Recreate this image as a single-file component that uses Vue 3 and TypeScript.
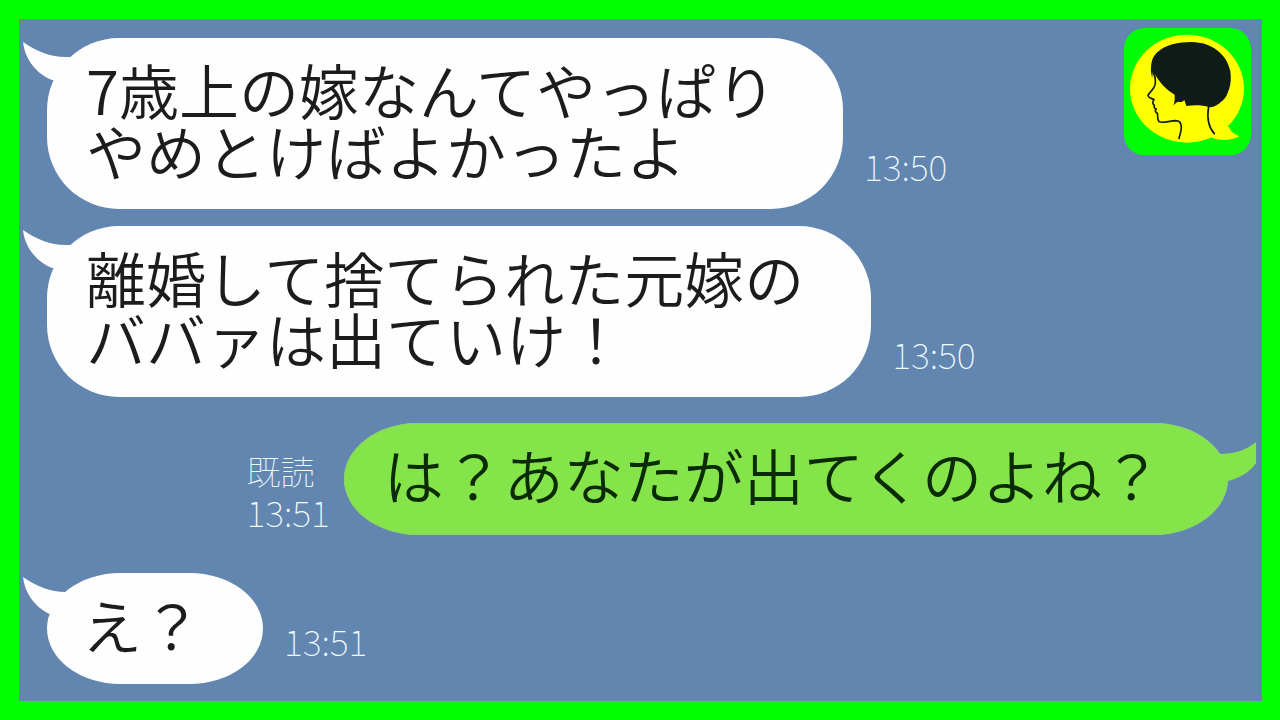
<script setup lang="ts">
interface Message {
  id: number
  side: 'left' | 'right'
  lines: string[]
  time: string
  read?: string
}

const messages: Message[] = [
  { id: 1, side: 'left', lines: ['7歳上の嫁なんてやっぱり', 'やめとけばよかったよ'], time: '13:50' },
  { id: 2, side: 'left', lines: ['離婚して捨てられた元嫁の', 'ババァは出ていけ！'], time: '13:50' },
  { id: 3, side: 'right', lines: ['は？あなたが出てくのよね？'], time: '13:51', read: '既読' },
  { id: 4, side: 'left', lines: ['え？'], time: '13:51' },
]
</script>

<template>
  <main class="frame">
    <svg class="logo" viewBox="42 24 384 384" role="img" aria-label="女性の横顔">
      <rect x="42" y="24" width="381" height="382" rx="62" fill="#00fc06" />
      <ellipse cx="231" cy="206" rx="171" ry="162" fill="#ffff00" />
      <path d="M298 350C328 363 360 364 388 349C372 343 361 334 357 322L320 300Z" fill="#ffff00" />
      <path
        d="M124 172C122 142 121 117 140 98C166 74 205 66 245 66C306 67 351 103 361 154C367 195 354 225 336 243C324 256 310 262 298 262C275 254 250 255 229 258L223 240C218 247 210 247 204 245C198 247 194 252 190 257C195 246 194 234 194 224C171 212 145 185 134 160L137 182L130 162L129 176L126 154Z"
        fill="#101c17"
      />
      <g fill="none" stroke="#101c17" stroke-linecap="round" stroke-linejoin="round">
        <path d="M133 160C137 178 139 192 132 202C126 213 116 219 114 227C116 235 126 235 132 239C127 245 127 251 133 256C131 262 133 265 139 267C134 270 135 276 142 280C144 287 141 298 147 305C155 311 177 303 197 302C207 302 213 308 214 319C215 334 209 344 207 355" stroke-width="5" />
        <path d="M296 260C290 294 297 323 313 341" stroke-width="5" />
        <path d="M351 218C349 228 343 236 337 241" stroke-width="3" />
      </g>
    </svg>

    <ul class="thread">
      <li
        v-for="message in messages"
        :key="message.id"
        class="message"
        :class="[message.side, { short: message.lines.length === 1 }]"
      >
        <div class="bubble">
          <svg v-if="message.side === 'left'" class="tail" viewBox="0 0 60 40" aria-hidden="true">
            <path d="M0 0C14 10 30 16 46 15H58V38H29C14 32 2 18 0 0Z" />
          </svg>
          <svg v-else class="tail" viewBox="0 0 48 40" aria-hidden="true">
            <path d="M48 0C38 8 28 12 10 12L5 20L20 39C32 36 42 30 48 21Z" />
          </svg>
          <p v-for="line in message.lines" :key="line" class="line">{{ line }}</p>
        </div>
        <div class="meta">
          <span v-if="message.read" class="read">{{ message.read }}</span>
          <time>{{ message.time }}</time>
        </div>
      </li>
    </ul>
  </main>
</template>

<style>
body {
  margin: 0;
}
</style>

<style scoped>
.frame {
  position: relative;
  box-sizing: border-box;
  min-height: 100vh;
  padding: 19px 28px 17px;
  border: 19px solid #00ff00;
  border-right-width: 18px;
  background: #6286b0;
  font-family: "Noto Sans CJK JP", sans-serif;
}

.logo {
  position: absolute;
  top: 9px;
  right: 10px;
  width: 128px;
  height: 128px;
}

.thread {
  margin: 0;
  padding: 0;
  list-style: none;
}

.message {
  display: flex;
  align-items: flex-end;
  gap: 21px;
}

.message + .message {
  margin-top: 17px;
}

.message.right {
  flex-direction: row-reverse;
  gap: 14px;
  margin-top: 26px;
  margin-right: 6px;
}

.message.right + .message {
  margin-top: 38px;
}

.bubble {
  position: relative;
  padding: 20px 67px 29px 39px;
  border-radius: 72px;
  background: #fefefe;
  color: #1c1c1c;
}

.short .bubble {
  padding: 20px 61px 30px 35px;
  border-radius: 74px / 56px;
}

.right .bubble {
  padding: 20px 66px 31px 40px;
  background: #85e449;
  box-shadow: inset 0 0 0 1px #8bd372;
  color: #0a2b06;
}

.tail {
  position: absolute;
  top: 4px;
  left: -24px;
  width: 60px;
  height: 40px;
  fill: #fefefe;
}

.right .tail {
  top: 19px;
  right: -28px;
  left: auto;
  width: 48px;
  fill: #85e449;
}

.line {
  margin: 0;
  font-size: 60px;
  font-weight: 350;
  line-height: 61px;
  white-space: nowrap;
}

.meta {
  display: flex;
  flex-direction: column;
  padding-bottom: 24px;
  color: #f0faff;
  font-size: 36px;
  font-weight: 100;
  line-height: 40px;
}

.read {
  font-size: 34px;
}

.right .meta {
  padding-bottom: 4px;
}
</style>
